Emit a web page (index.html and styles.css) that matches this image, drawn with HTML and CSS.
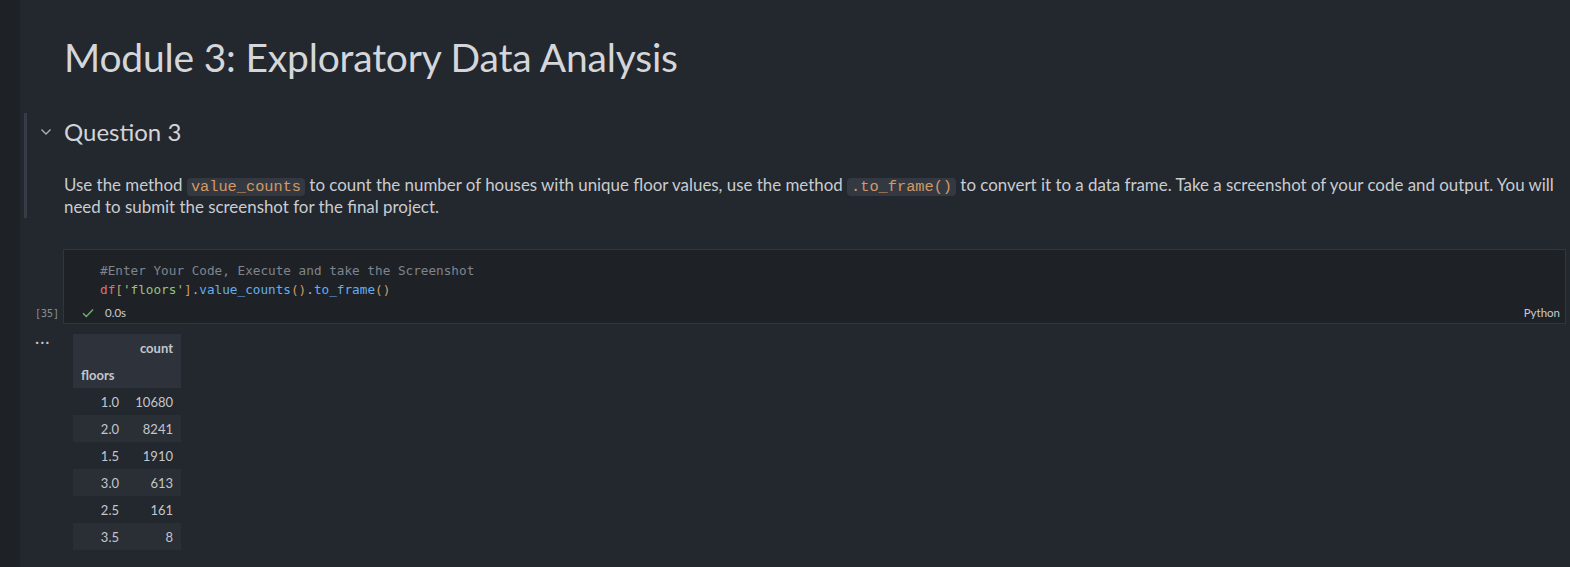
FILE: index.html
```html
<!DOCTYPE html>
<html>
<head>
<meta charset="utf-8">
<link rel="stylesheet" href="styles.css">
</head>
<body>
<div class="gutter"></div>
<main class="notebook">
  <section class="cell md-cell title-cell">
    <div class="cell-side"></div>
    <div class="cell-body">
      <h1 class="h1">Module 3: Exploratory Data Analysis</h1>
    </div>
  </section>

  <section class="cell md-cell active">
    <div class="cell-side">
      <div class="focus-bar"></div>
      <svg class="chevron" width="12" height="8" viewBox="0 0 12 8"><path d="M1.5 1.5 L6 6 L10.5 1.5" fill="none" stroke="#aeb3bb" stroke-width="1.3"/></svg>
    </div>
    <div class="cell-body">
      <h2 class="h2">Question 3</h2>
      <p class="para">Use the method <code class="inline">value_counts</code> to count the number of houses with unique floor values, use the method <code class="inline">.to_frame()</code> to convert it to a data frame. Take a screenshot of your code and output. You will need to submit the screenshot for the final project.</p>
    </div>
  </section>

  <section class="cell code-cell">
    <div class="cell-side">
      <span class="exec-count">[35]</span>
    </div>
    <div class="code-box">
      <pre class="code"><span class="c-comment">#Enter Your Code, Execute and take the Screenshot</span>
<span class="c-var">df</span><span class="c-br">[</span><span class="c-str">'floors'</span><span class="c-br">]</span><span class="c-p">.</span><span class="c-fn">value_counts</span><span class="c-br">()</span><span class="c-p">.</span><span class="c-fn">to_frame</span><span class="c-br">()</span></pre>
      <div class="status">
        <svg class="check" width="12" height="10" viewBox="0 0 12 10"><path d="M1 5.2 L4.3 8.5 L11 1.5" fill="none" stroke="#6fb36f" stroke-width="1.3"/></svg>
        <span class="time">0.0s</span>
        <span class="lang">Python</span>
      </div>
    </div>
  </section>

  <section class="cell output-cell">
    <div class="cell-side">
      <span class="dots">···</span>
    </div>
    <div class="output-body">
      <table class="df">
        <thead>
          <tr><th></th><th class="r">count</th></tr>
          <tr><th class="l">floors</th><th></th></tr>
        </thead>
        <tbody>
          <tr><td>1.0</td><td>10680</td></tr>
          <tr><td>2.0</td><td>8241</td></tr>
          <tr><td>1.5</td><td>1910</td></tr>
          <tr><td>3.0</td><td>613</td></tr>
          <tr><td>2.5</td><td>161</td></tr>
          <tr><td>3.5</td><td>8</td></tr>
        </tbody>
      </table>
    </div>
  </section>
</main>
</body>
</html>
```

FILE: styles.css
```css
html, body {
  margin: 0;
  padding: 0;
  height: 100%;
}
body {
  background: #23272e;
  display: flex;
  font-family: "Lato", "Open Sans", sans-serif;
  color: #c9ccd1;
  overflow: hidden;
}
.gutter {
  width: 20px;
  flex: 0 0 20px;
  background: #1e2227;
}
.notebook {
  flex: 1;
  display: flex;
  flex-direction: column;
  padding-right: 4px;
  min-width: 0;
}
.cell {
  display: flex;
}
.cell-side {
  width: 43px;
  flex: 0 0 43px;
  position: relative;
}
.cell-body {
  flex: 1;
  padding-left: 1px;
  min-width: 0;
}
.title-cell {
  padding-top: 32px;
  height: 86px;
  box-sizing: border-box;
}
.h1 {
  margin: 0;
  font-weight: 400;
  font-size: 39px;
  line-height: 50px;
  color: #d4d6da;
  letter-spacing: -0.2px;
}
.md-cell.active {
  margin-top: 27px;
  height: 105px;
}
.focus-bar {
  position: absolute;
  left: 4px;
  top: 0;
  width: 3px;
  height: 105px;
  background: #363b45;
}
.chevron {
  position: absolute;
  left: 20px;
  top: 15px;
}
.h2 {
  margin: 0;
  font-weight: 400;
  font-size: 24px;
  line-height: 38px;
  color: #d1d4d8;
}
.para {
  margin: 23px 0 0;
  font-size: 16.9px;
  line-height: 22px;
  color: #c9ccd1;
}
.inline {
  font-family: "Liberation Mono", "DejaVu Sans Mono", monospace;
  font-size: 15.3px;
  line-height: 18px;
  color: #d19a66;
  background: #343941;
  border-radius: 4px;
  padding: 0 4px;
}
.code-cell {
  margin-top: 31px;
}
.exec-count {
  position: absolute;
  left: 15px;
  top: 59px;
  font-family: "DejaVu Sans Mono", monospace;
  font-size: 10px;
  color: #8a9099;
}
.code-box {
  flex: 1;
  background: #1e2227;
  border: 1px solid #30353e;
  height: 75px;
  box-sizing: border-box;
  display: flex;
  flex-direction: column;
}
.code {
  margin: 0;
  padding: 11px 0 0 36px;
  font-family: "DejaVu Sans Mono", "Liberation Mono", monospace;
  font-size: 12.7px;
  line-height: 19px;
  color: #abb2bf;
  height: 53px;
  box-sizing: border-box;
}
.c-comment { color: #7f848e; }
.c-var { color: #e06c75; }
.c-br { color: #d19a66; }
.c-str { color: #98c379; }
.c-p { color: #abb2bf; }
.c-fn { color: #61afef; }
.status {
  display: flex;
  align-items: center;
  height: 21px;
  padding: 0 5px 0 18px;
  font-size: 11.5px;
  color: #c8cbd0;
}
.check {
  margin-right: 11px;
}
.time {
  flex: 1;
}
.lang {
  font-size: 11.5px;
  color: #c8cbd0;
}
.output-cell {
  margin-top: 10px;
}
.dots {
  position: absolute;
  left: 15px;
  top: -3px;
  font-size: 16px;
  font-weight: 400;
  color: #c0c4ca;
  letter-spacing: 1px;
}
.output-body {
  padding-left: 10px;
}
.df {
  border-collapse: collapse;
  font-size: 13px;
  color: #c3c7cd;
}
.df th, .df td {
  height: 27px;
  padding: 0 8px;
  text-align: right;
}
.df thead tr {
  background: #2e323a;
}
.df th {
  font-weight: 700;
  color: #c3c7cd;
}
.df th.l {
  text-align: left;
}
.df td:first-child {
  width: 38px;
}
.df td:last-child {
  width: 38px;
}
.df tbody tr:nth-child(even) {
  background: #2a2e35;
}
```
